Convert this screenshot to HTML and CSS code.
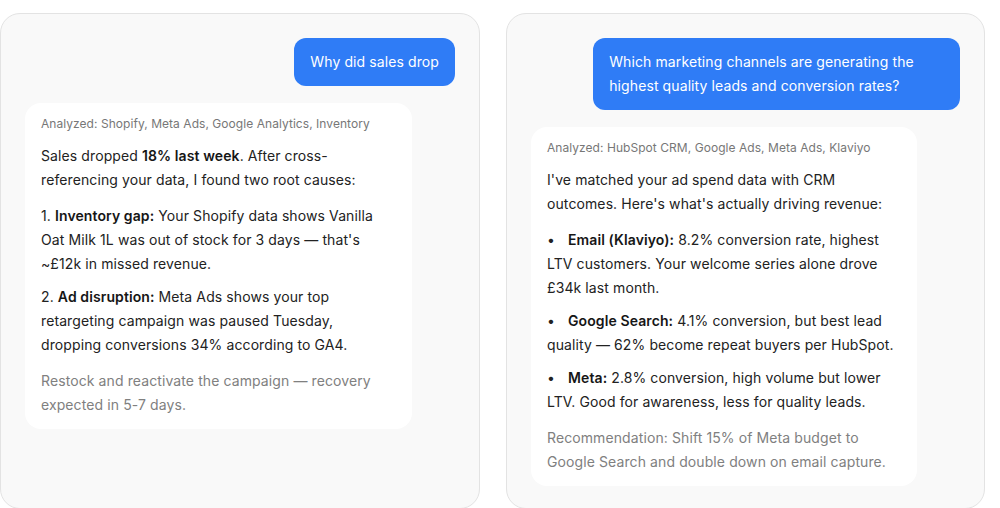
FILE: index.html
```html
<!DOCTYPE html>
<html lang="en">
<head>
<meta charset="utf-8">
<title>Chat examples</title>
<link rel="stylesheet" href="styles.css">
</head>
<body>
<main class="board">
  <section class="card card-left">
    <div class="user-msg">Why did sales drop</div>
    <div class="bot-msg">
      <p class="source">Analyzed: Shopify, Meta Ads, Google Analytics, Inventory</p>
      <p>Sales dropped <strong>18% last week</strong>. After cross-referencing your data, I found two root causes:</p>
      <ul class="items">
        <li>1. <strong>Inventory gap:</strong> Your Shopify data shows Vanilla Oat Milk 1L was out of stock for 3 days — that's ~£12k in missed revenue.</li>
        <li>2. <strong>Ad disruption:</strong> Meta Ads shows your top retargeting campaign was paused Tuesday, dropping conversions 34% according to GA4.</li>
      </ul>
      <p class="note">Restock and reactivate the campaign — recovery expected in 5-7 days.</p>
    </div>
  </section>
  <section class="card card-right">
    <div class="user-msg">Which marketing channels are generating the highest quality leads and conversion rates?</div>
    <div class="bot-msg">
      <p class="source">Analyzed: HubSpot CRM, Google Ads, Meta Ads, Klaviyo</p>
      <p>I've matched your ad spend data with CRM outcomes. Here's what's actually driving revenue:</p>
      <ul class="items bullets">
        <li><strong>Email (Klaviyo):</strong> 8.2% conversion rate, highest LTV customers. Your welcome series alone drove £34k last month.</li>
        <li><strong>Google Search:</strong> 4.1% conversion, but best lead quality — 62% become repeat buyers per HubSpot.</li>
        <li><strong>Meta:</strong> 2.8% conversion, high volume but lower LTV. Good for awareness, less for quality leads.</li>
      </ul>
      <p class="note">Recommendation: Shift 15% of Meta budget to Google Search and double down on email capture.</p>
    </div>
  </section>
</main>
</body>
</html>
```
FILE: styles.css
```css
* { box-sizing: border-box; }
html, body { margin: 0; padding: 0; background: #ffffff; }
body {
  font-family: Inter, "Noto Sans", "Liberation Sans", sans-serif;
  color: #222222;
  overflow: hidden;
}
.board {
  display: flex;
  gap: 26px;
  padding-top: 13px;
}
.card {
  flex: none;
  height: 496px;
  background: #f9f9f9;
  border: 1px solid #e3e3e3;
  border-radius: 20px;
  padding: 24px;
  display: flex;
  flex-direction: column;
  gap: 17px;
}
.card-left { width: 480px; }
.card-right { width: 479px; }
.user-msg {
  align-self: flex-end;
  max-width: 85.5%;
  background: #2f7cf6;
  color: #ffffff;
  font-size: 14px;
  letter-spacing: 0.1px;
  line-height: 24px;
  padding: 12px 16px;
  border-radius: 12px;
}
.bot-msg {
  align-self: flex-start;
  width: 90%;
  background: #ffffff;
  border-radius: 16px;
  padding: 12px 16px;
  font-size: 14px;
  letter-spacing: 0.1px;
  line-height: 24px;
}
.bot-msg p { margin: 12px 0 0; }
.bot-msg p.source {
  margin: 0;
  font-size: 12px;
  letter-spacing: 0.05px;
  line-height: 17px;
  color: #777777;
}
.bot-msg strong { font-weight: 600; color: #161616; }
.items {
  list-style: none;
  margin: 12px 0 0;
  padding: 0;
  display: flex;
  flex-direction: column;
  gap: 9px;
}
.bullets li::before {
  content: "•";
  display: inline-block;
  width: 21px;
}
.bot-msg p.note { color: #808080; }
```
